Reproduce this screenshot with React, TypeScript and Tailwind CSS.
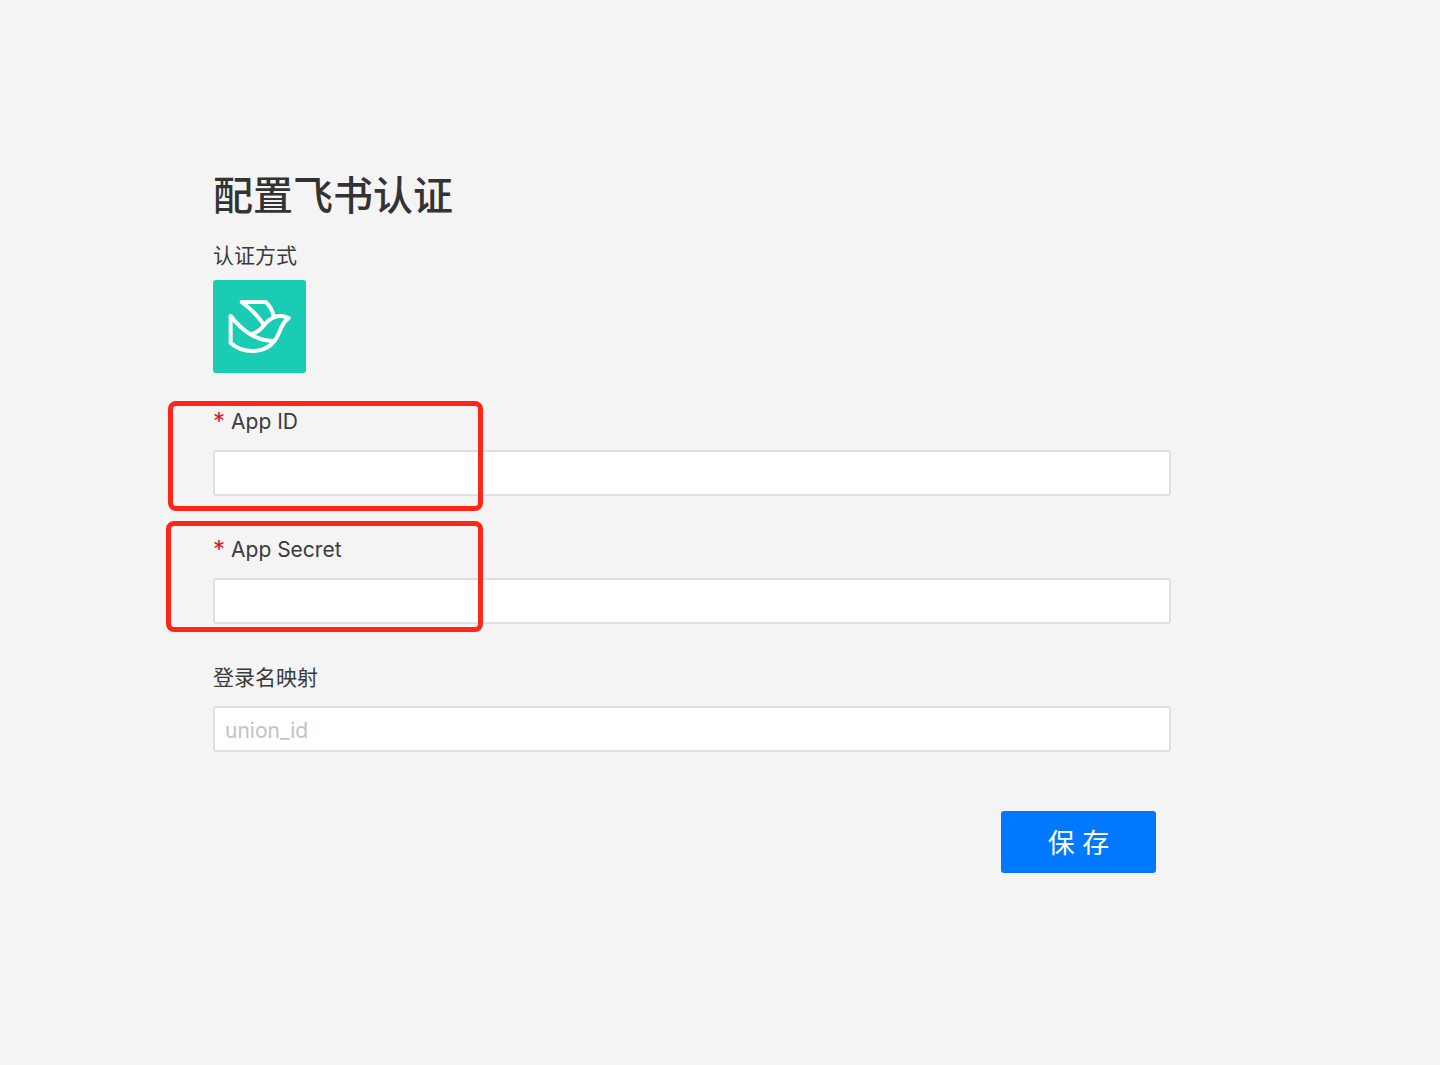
import React, { useState } from 'react';

type FieldProps = {
  id: string;
  label: string;
  value: string;
  onChange: (value: string) => void;
  required?: boolean;
  placeholder?: string;
  children?: React.ReactNode;
};

const Field: React.FC<FieldProps> = ({ id, label, value, onChange, required, placeholder, children }) => {
  return (
    <div className="relative flex flex-col gap-3">
      <label htmlFor={id} className="flex gap-1.5 text-[21px] leading-8">
        {required && <span className="text-2xl leading-8 text-[#cf1a31]">*</span>}
        {label}
      </label>
      <input
        id={id}
        type="text"
        value={value}
        required={required}
        placeholder={placeholder}
        onChange={(e) => onChange(e.target.value)}
        className="h-[46px] w-full rounded-[3px] border-2 border-[#e0e0e0] bg-white px-2.5 pt-0.5 text-[21px] placeholder:text-[#c3c3c3]"
      />
      {children}
    </div>
  );
};

const BirdLogo: React.FC = () => {
  return (
    <svg
      viewBox="24 28 279 279"
      className="size-[93px] rounded-[3px] bg-[#1accb3]"
      fill="none"
      stroke="white"
      strokeWidth="12"
      strokeLinecap="round"
      strokeLinejoin="round"
      role="img"
      aria-label="飞书"
    >
      <path d="M77 136 V217 C96 234 118 241 142 241 C169 241 193 231 209 210 C227 187 225 160 251 142 C225 130 202 135 180 160 C167 177 155 188 137 190" />
      <path d="M77 136 C94 158 113 177 135 190 C157 204 181 212 208 210" />
      <path d="M206 136 C202 118 194 104 182 94 H110 C136 113 160 137 177 163" />
    </svg>
  );
};

const App: React.FC = () => {
  const [appId, setAppId] = useState('');
  const [appSecret, setAppSecret] = useState('');
  const [mapping, setMapping] = useState('');

  return (
    <main className="min-h-screen bg-[#f4f4f4] pt-[166px] pr-[269px] pb-16 pl-[213px] font-['Inter','Noto_Sans_CJK_SC',sans-serif] text-[#3a3a3a]">
      <h1 className="text-[40px] leading-[60px] font-medium text-[#333333]">配置飞书认证</h1>
      <p className="mt-3.5 mb-2 text-[21px] leading-8">认证方式</p>
      <BirdLogo />

      <form className="mt-[33px] flex flex-col" onSubmit={(e) => e.preventDefault()}>
        <div className="flex flex-col gap-[38px]">
          <Field id="app-id" label="App ID" value={appId} onChange={setAppId} required>
            <div className="pointer-events-none absolute -top-[5px] -left-[45px] h-[110px] w-[315px] rounded-lg border-5 border-[#ff2617]" />
          </Field>
          <Field id="app-secret" label="App Secret" value={appSecret} onChange={setAppSecret} required>
            <div className="pointer-events-none absolute -top-[13px] -left-[47px] h-[111px] w-[317px] rounded-lg border-5 border-[#ff2617]" />
          </Field>
          <Field id="mapping" label="登录名映射" value={mapping} onChange={setMapping} placeholder="union_id" />
        </div>
        <button
          type="submit"
          className="mt-[59px] mr-[15px] h-[62px] w-[155px] self-end rounded-[3px] bg-[#0079ff] pt-1 text-[27px] text-white"
        >
          保 存
        </button>
      </form>
    </main>
  );
};

export default App;
